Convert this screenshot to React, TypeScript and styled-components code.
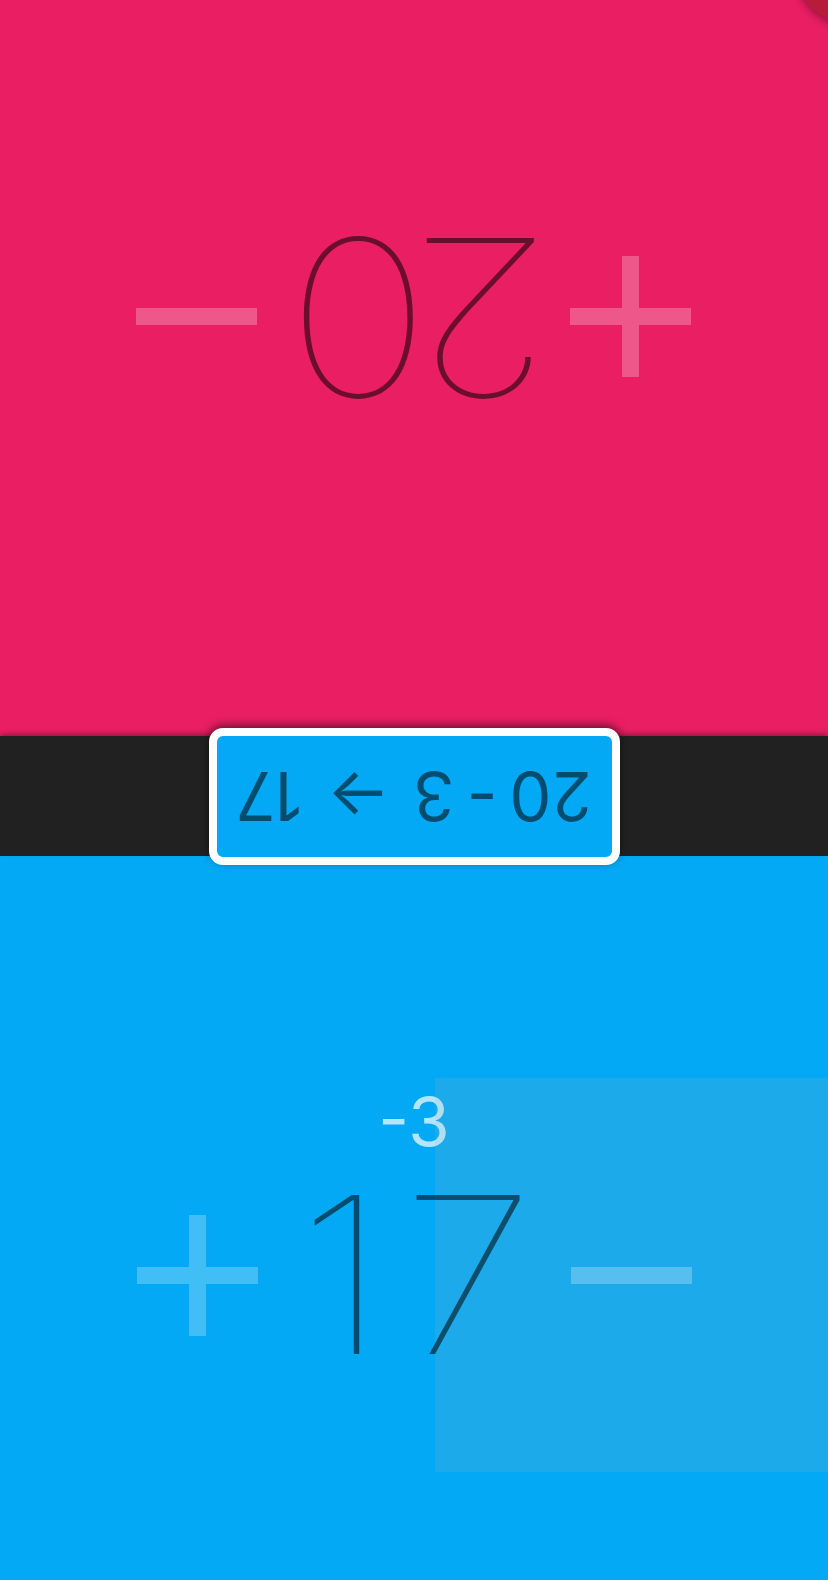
import React from "react";
import styled, { createGlobalStyle } from "styled-components";

const GlobalStyle = createGlobalStyle`
  html, body { margin: 0; padding: 0; background: #212121; }
  body { font-family: Inter, Roboto, "Noto Sans", sans-serif; overflow: hidden; }
  * { box-sizing: border-box; }
`;

const Screen = styled.main`
  position: relative;
  width: 828px;
  height: 1580px;
  display: flex;
  flex-direction: column;
  overflow: hidden;
`;

const Panel = styled.section<{ $bg: string; $flipped?: boolean; $h: number }>`
  position: relative;
  flex: none;
  height: ${(p) => p.$h}px;
  background: ${(p) => p.$bg};
  transform: ${(p) => (p.$flipped ? "rotate(180deg)" : "none")};
  display: flex;
  flex-direction: column;
  padding-top: 231px;
  overflow: hidden;
`;

const DeltaLabel = styled.div`
  height: 70px;
  margin-bottom: 7px;
  font-family: Inter, Roboto, sans-serif;
  font-size: 67px;
  line-height: 70px;
  font-weight: 400;
  text-align: center;
  color: rgba(255, 255, 255, 0.7);
`;

const CounterRow = styled.div`
  display: flex;
  align-items: center;
  justify-content: space-between;
  height: 222px;
  padding: 0 136px 0 137px;
`;

const Count = styled.div`
  position: relative;
  z-index: 1;
  flex: 1;
  display: flex;
  justify-content: center;
  padding-right: 20px;
  font-family: Inter, Roboto, sans-serif;
  font-size: 218px;
  line-height: 222px;
  font-weight: 100;
  color: rgba(0, 0, 0, 0.54);
`;

const DigitCell = styled.span`
  display: block;
  width: 126px;
  text-align: center;
  transform: scaleX(1.12);
`;

const StepButton = styled.button`
  position: relative;
  width: 121px;
  height: 121px;
  padding: 0;
  border: 0;
  background: none;
  display: grid;
  place-items: center;
  cursor: pointer;
`;

const Ripple = styled.span`
  position: absolute;
  left: 50%;
  top: 50%;
  width: 394px;
  height: 394px;
  transform: translate(-50%, -50%);
  background: rgba(180, 180, 180, 0.15);
`;

const Glyph = styled.svg`
  position: relative;
  display: block;
  opacity: 0.25;
`;

const Band = styled.div`
  position: relative;
  z-index: 2;
  flex: none;
  height: 120px;
  background: #212121;
  box-shadow: 0 -3px 5px -1px rgba(0, 0, 0, 0.35);
  display: flex;
  align-items: center;
  justify-content: center;
`;

const HistoryCard = styled.div`
  width: 411px;
  height: 137px;
  flex: none;
  border: 8px solid #fff;
  border-radius: 14px;
  background: #03a9f4;
  box-shadow: 0 3px 8px rgba(0, 0, 0, 0.5);
  display: flex;
  align-items: center;
  justify-content: center;
  transform: rotate(180deg);
  font-family: Inter, Roboto, sans-serif;
  font-size: 67px;
  font-weight: 400;
  word-spacing: -7px;
  color: rgba(0, 0, 0, 0.54);
  white-space: pre;
`;

const ArrowGlyph = styled.span`
  margin: 0 13px 0 11px;
`;

const CornerFab = styled.div`
  position: absolute;
  left: 796px;
  top: -84px;
  width: 108px;
  height: 108px;
  border-radius: 50%;
  background: #b71c3a;
  box-shadow: 0 2px 8px rgba(0, 0, 0, 0.4);
`;

const PlusIcon = () => (
  <Glyph width="121" height="121" viewBox="0 0 121 121">
    <path d="M52 0h17v52h52v17H69v52H52V69H0V52h52z" fill="#fff" />
  </Glyph>
);

const MinusIcon = () => (
  <Glyph width="121" height="121" viewBox="0 0 121 121">
    <rect x="0" y="52" width="121" height="17" fill="#fff" />
  </Glyph>
);

type PlayerProps = {
  bg: string;
  life: number;
  delta?: string;
  flipped?: boolean;
  height: number;
  pressedMinus?: boolean;
};

const Player = ({ bg, life, delta, flipped, height, pressedMinus }: PlayerProps) => (
  <Panel $bg={bg} $flipped={flipped} $h={height}>
    <DeltaLabel>{delta ?? ""}</DeltaLabel>
    <CounterRow>
      <StepButton aria-label="increase">
        <PlusIcon />
      </StepButton>
      <Count aria-label={String(life)}>
        {String(life)
          .split("")
          .map((d, i) => (
            <DigitCell key={i}>{d}</DigitCell>
          ))}
      </Count>
      <StepButton aria-label="decrease">
        {pressedMinus && <Ripple />}
        <MinusIcon />
      </StepButton>
    </CounterRow>
  </Panel>
);

export default function App() {
  return (
    <>
      <GlobalStyle />
      <Screen>
        <Player bg="#e91e63" life={20} flipped height={736} />
        <Band>
          <HistoryCard>
            {"20 - 3 "}
            <ArrowGlyph>→</ArrowGlyph>
            {" 17"}
          </HistoryCard>
        </Band>
        <Player bg="#03a9f4" life={17} delta="-3" height={724} pressedMinus />
        <CornerFab />
      </Screen>
    </>
  );
}
